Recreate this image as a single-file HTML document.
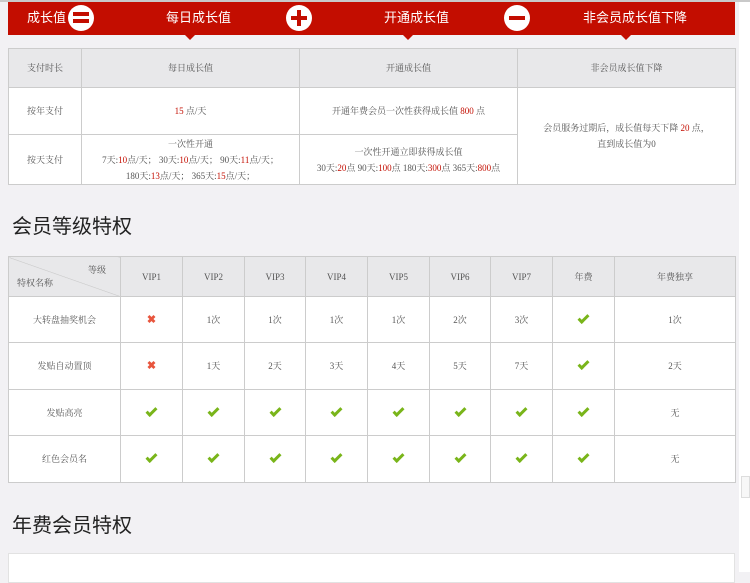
<!DOCTYPE html>
<html><head><meta charset="utf-8"><style>
*{margin:0;padding:0;box-sizing:border-box}
body{width:750px;height:572px;overflow:hidden;background:#f2f1f4;font-family:"Liberation Sans","Noto Sans CJK SC",sans-serif;color:#555;position:relative}
.topline{position:absolute;left:0;top:0;width:750px;height:2px;background:#c9c9c9}
.rs{position:absolute;left:739px;top:2px;width:11px;height:570px;background:#fff}
.sb{position:absolute;left:741px;top:476px;width:9px;height:22px;border:1px solid #ddd;background:#f7f7f7}
.bar{position:absolute;left:8px;top:2px;width:727px;height:33px;background:#c30d00;color:#fff;font-size:13px}
.bar span{position:absolute;top:0;line-height:31px}
.ic{position:absolute;top:3px;width:26px;height:26px;border-radius:50%;background:#fff}
.tri{position:absolute;top:35px;width:0;height:0;border-left:5px solid transparent;border-right:5px solid transparent;border-top:5px solid #c30d00}
table{position:absolute;border-collapse:collapse;background:#fff;font-size:9px;table-layout:fixed;font-family:"Liberation Serif","Noto Serif CJK SC",serif;color:#555}
td{border:1px solid #ccc;text-align:center;vertical-align:middle;line-height:16px}
.h td{background:#e8e8ea}
.r{color:#c30d00}
h2{position:absolute;left:12px;font-size:20px;font-weight:normal;color:#222}
.x{color:#e8553d;font-weight:bold;font-size:11px}
.ok{display:inline-block;width:11px;height:6px;border-left:3px solid #79b51a;border-bottom:3px solid #79b51a;transform:rotate(-45deg);margin-top:-5px;vertical-align:middle}
</style></head><body>
<div class="topline"></div>
<div class="rs"></div><div class="sb"></div>
<div class="bar">
<span style="left:19px">成长值</span>
<div class="ic" style="left:60px"><div style="position:absolute;left:5px;top:7px;width:16px;height:4px;background:#c30d00"></div><div style="position:absolute;left:5px;top:14px;width:16px;height:4px;background:#c30d00"></div></div>
<span style="left:158px">每日成长值</span>
<div class="ic" style="left:278px"><div style="position:absolute;left:5px;top:11px;width:16px;height:4px;background:#c30d00"></div><div style="position:absolute;left:11px;top:5px;width:4px;height:16px;background:#c30d00"></div></div>
<span style="left:376px">开通成长值</span>
<div class="ic" style="left:496px"><div style="position:absolute;left:5px;top:11px;width:16px;height:4px;background:#c30d00"></div></div>
<span style="left:575px">非会员成长值下降</span>
</div>
<div class="tri" style="left:185px"></div><div class="tri" style="left:403px"></div><div class="tri" style="left:621px"></div>

<table style="left:8px;top:48px;width:727px">
<colgroup><col style="width:73px"><col style="width:218px"><col style="width:218px"><col style="width:218px"></colgroup>
<tr class="h" style="height:39px"><td>支付时长</td><td>每日成长值</td><td>开通成长值</td><td>非会员成长值下降</td></tr>
<tr style="height:47px"><td>按年支付</td><td><span class="r">15</span> 点/天</td><td>开通年费会员一次性获得成长值 <span class="r">800</span> 点</td><td rowspan="2">会员服务过期后，成长值每天下降 <span class="r">20</span> 点，<br>直到成长值为0</td></tr>
<tr style="height:50px"><td>按天支付</td><td>一次性开通<br>7天:<span class="r">10</span>点/天； 30天:<span class="r">10</span>点/天； 90天:<span class="r">11</span>点/天；<br>180天:<span class="r">13</span>点/天； 365天:<span class="r">15</span>点/天；</td><td style="white-space:nowrap">一次性开通立即获得成长值<br>30天:<span class="r">20</span>点 90天:<span class="r">100</span>点 180天:<span class="r">300</span>点 365天:<span class="r">800</span>点</td></tr>
</table>

<h2 style="top:210px">会员等级特权</h2>
<table style="left:8px;top:256px;width:727px">
<colgroup><col style="width:112px"><col style="width:62px"><col style="width:62px"><col style="width:61px"><col style="width:62px"><col style="width:62px"><col style="width:61px"><col style="width:62px"><col style="width:62px"><col style="width:121px"></colgroup>
<tr class="h" style="height:40px"><td style="position:relative;background:linear-gradient(to bottom left,#e8e8ea 49.5%,#c8c8c8 50%,#e8e8ea 51%)"><div style="text-align:right;padding-right:14px;line-height:12px">等级</div><div style="text-align:left;padding-left:8px;line-height:14px">特权名称</div></td><td>VIP1</td><td>VIP2</td><td>VIP3</td><td>VIP4</td><td>VIP5</td><td>VIP6</td><td>VIP7</td><td>年费</td><td>年费独享</td></tr>
<tr style="height:46px"><td>大转盘抽奖机会</td><td class="x">✖</td><td>1次</td><td>1次</td><td>1次</td><td>1次</td><td>2次</td><td>3次</td><td><i class="ok"></i></td><td>1次</td></tr>
<tr style="height:47px"><td>发贴自动置顶</td><td class="x">✖</td><td>1天</td><td>2天</td><td>3天</td><td>4天</td><td>5天</td><td>7天</td><td><i class="ok"></i></td><td>2天</td></tr>
<tr style="height:46px"><td>发贴高亮</td><td><i class="ok"></i></td><td><i class="ok"></i></td><td><i class="ok"></i></td><td><i class="ok"></i></td><td><i class="ok"></i></td><td><i class="ok"></i></td><td><i class="ok"></i></td><td><i class="ok"></i></td><td>无</td></tr>
<tr style="height:47px"><td>红色会员名</td><td><i class="ok"></i></td><td><i class="ok"></i></td><td><i class="ok"></i></td><td><i class="ok"></i></td><td><i class="ok"></i></td><td><i class="ok"></i></td><td><i class="ok"></i></td><td><i class="ok"></i></td><td>无</td></tr>
</table>

<h2 style="top:509px">年费会员特权</h2>
<div style="position:absolute;left:8px;top:553px;width:727px;height:30px;background:#fff;border:1px solid #e2e2e2"></div>
</body></html>
